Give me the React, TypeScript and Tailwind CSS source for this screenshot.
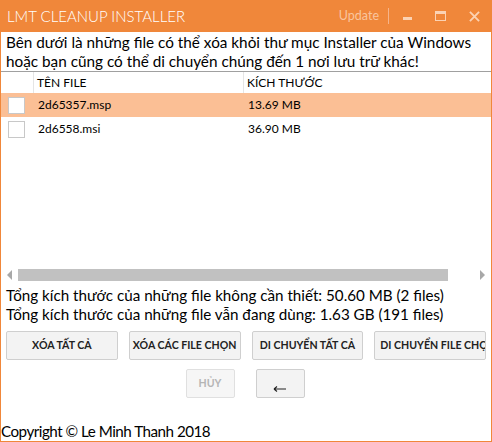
import React from "react";

const font = { fontFamily: 'Lato, "Open Sans", sans-serif' };

function Btn({ children, disabled, left }: { children: React.ReactNode; disabled?: boolean; left?: boolean }) {
  return (
    <div
      className={
        "h-[29px] flex items-center rounded-[2px] border text-[10.6px] font-bold whitespace-nowrap overflow-hidden " +
        (left ? "justify-start pl-[5px] " : "justify-center ") +
        (disabled ? "border-[#e0e0e0] bg-[#f6f6f6] text-[#b5b5b5]" : "border-[#cfcfcf] bg-[#f3f3f3] text-[#222]")
      }
    >
      {children}
    </div>
  );
}

function Check() {
  return <div className="w-[17px] h-[17px] bg-white border border-[#c8c8c8]" />;
}

export default function App() {
  return (
    <div className="w-[492px] h-[442px] flex flex-col bg-white border border-t-0 border-[#f0873a] overflow-hidden" style={font}>
      <div className="h-[32px] shrink-0 bg-[#f0873a] flex items-center pl-[7px] pr-[12px] -mx-px">
        <div className="text-white text-[15px] font-light">LMT CLEANUP INSTALLER</div>
        <div className="flex-1" />
        <div className="text-[#f9c59e] text-[12.5px]">Update</div>
        <div className="w-px h-[16px] bg-[#f6b48a] ml-[9px] mr-[10px]" />
        <div className="w-[9px] h-[3px] bg-[#fbd2b3] mt-[4px] ml-[4px]" />
        <div className="w-[11px] h-[10px] border border-[#fbd2b3] border-t-[3px] ml-[23px]" />
        <svg className="ml-[23px]" width="11" height="11" viewBox="0 0 12 12">
          <path d="M1 1 L11 11 M11 1 L1 11" stroke="#fbd2b3" strokeWidth="2" />
        </svg>
      </div>
      <div className="h-[39px] shrink-0 px-[5px] pt-[1px] text-[15.3px] leading-[19px] text-black whitespace-nowrap">
        <div>Bên dưới là những file có thể xóa khỏi thư mục Installer của Windows</div>
        <div>hoặc bạn cũng có thể di chuyển chúng đến 1 nơi lưu trữ khác!</div>
      </div>
      <div className="h-[215px] shrink-0 border-t border-[#a0a0a0] flex flex-col text-[12px] text-black">
        <div className="h-[21px] flex items-center">
          <div className="w-[33px] h-full border-r border-[#e5e5e5]" />
          <div className="w-[210px] h-full border-r border-[#e5e5e5] pl-[3px] flex items-center">TÊN FILE</div>
          <div className="pl-[3px]">KÍCH THƯỚC</div>
        </div>
        <div className="h-[24px] flex items-center bg-[#fbbf95]">
          <div className="w-[33px] pl-[7px]"><Check /></div>
          <div className="w-[210px] pl-[4px]">2d65357.msp</div>
          <div className="pl-[4px]">13.69 MB</div>
        </div>
        <div className="h-[24px] flex items-center">
          <div className="w-[33px] pl-[7px]"><Check /></div>
          <div className="w-[210px] pl-[4px]">2d6558.msi</div>
          <div className="pl-[4px]">36.90 MB</div>
        </div>
        <div className="flex-1" />
        <div className="h-[13px] flex items-center px-[6px] mb-[5px]">
          <svg width="5" height="10" viewBox="0 0 5 10"><path d="M5 0 L0 5 L5 10 Z" fill="#a8a8a8" /></svg>
          <div className="ml-[6px] w-[430px] h-[12px] bg-[#c1c1c1]" />
          <div className="flex-1" />
          <svg width="5" height="10" viewBox="0 0 5 10"><path d="M0 0 L5 5 L0 10 Z" fill="#a8a8a8" /></svg>
        </div>
      </div>
      <div className="px-[5px] text-[15.2px] leading-[19px] text-black whitespace-nowrap">
        <div>Tổng kích thước của những file không cần thiết: 50.60 MB (2 files)</div>
        <div>Tổng kích thước của những file vẫn đang dùng: 1.63 GB (191 files)</div>
      </div>
      <div className="grid grid-cols-4 gap-[11px] px-[5px] mt-[7px]">
        <Btn>XÓA TẤT CẢ</Btn>
        <Btn>XÓA CÁC FILE CHỌN</Btn>
        <Btn>DI CHUYỂN TẤT CẢ</Btn>
        <Btn left>DI CHUYỂN FILE CHỌN</Btn>
      </div>
      <div className="flex justify-center gap-[21px] mt-[9px] pr-[2px]">
        <div className="w-[49px]"><Btn disabled>HỦY</Btn></div>
        <div className="w-[49px]">
          <Btn>
            <svg className="mt-[10px]" width="14" height="6" viewBox="0 0 14 6">
              <path d="M1 3 H13 M1 3 L4 0.5 M1 3 L4 5.5" stroke="#222" strokeWidth="1.1" fill="none" />
            </svg>
          </Btn>
        </div>
      </div>
      <div className="flex-1" />
      <div className="text-[15.2px] tracking-[-0.5px] leading-[20px] text-black whitespace-nowrap">Copyright © Le Minh Thanh 2018</div>
    </div>
  );
}
